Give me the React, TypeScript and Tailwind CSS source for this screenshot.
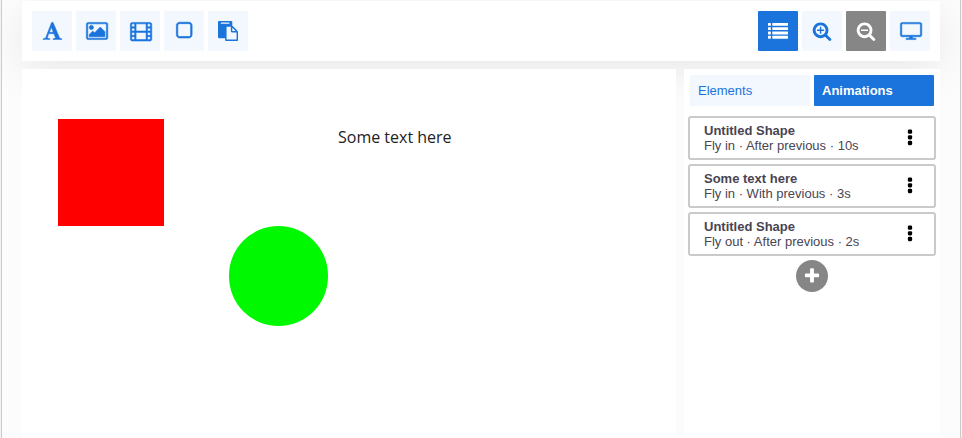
import type { ReactNode } from "react";

type GlyphProps = { className?: string; viewBox?: string; weight?: number; children: ReactNode };

function Glyph({ className = "size-5", viewBox = "0 0 1792 1792", weight = 0, children }: GlyphProps) {
  return (
    <svg
      viewBox={viewBox}
      className={`${className} shrink-0 overflow-visible`}
      fill="currentColor"
      fillRule="evenodd"
      stroke={weight ? "currentColor" : "none"}
      strokeWidth={weight}
      aria-hidden="true"
    >
      {children}
    </svg>
  );
}

/* Wide glyphs hang over both sides of the em box. */
const wide = "-96 0 1792 1792";

const FontIcon = () => (
  <Glyph weight={50} viewBox="-40 0 1792 1792">
    <path d="M789 559l-170 450q33 0 136.5 2t160.5 2q19 0 57-2-87-253-184-452zm-725 1105l2-79q23-7 56-12.5t57-10.5 49.5-14.5 44.5-29 31-50.5l237-616 280-724h128q8 14 11 21l205 480q33 78 106 257.5t114 274.5q15 34 58 144.5t72 168.5q20 45 35 57 19 15 88 29.5t84 20.5q6 38 6 57 0 5-.5 13.5t-.5 12.5q-63 0-190-8t-191-8q-76 0-215 7t-178 8q0-43 4-78l131-28q1 0 12.5-2.5t15.5-3.5 14.5-4.5 15-6.5 11-8 9-11 2.5-14q0-16-31-96.5t-72-177.5-42-100l-450-2q-26 58-76.5 195.5t-50.5 162.5q0 22 14 37.5t43.5 24.5 48.5 13.5 57 8.5 41 4q1 19 1 58 0 9-2 27-58 0-174.5-10t-174.5-10q-8 0-26.5 4t-21.5 4q-80 14-188 14z" />
  </Glyph>
);

const ImageIcon = () => (
  <Glyph weight={50} viewBox={wide}>
    <path d="M576 576q0 80-56 136t-136 56-136-56-56-136 56-136 136-56 136 56 56 136zm1024 384v448h-1408v-192l320-320 160 160 512-512zm96-704h-1600q-13 0-22.5 9.5t-9.5 22.5v1216q0 13 9.5 22.5t22.5 9.5h1600q13 0 22.5-9.5t9.5-22.5v-1216q0-13-9.5-22.5t-22.5-9.5zm160 32v1216q0 66-47 113t-113 47h-1600q-66 0-113-47t-47-113v-1216q0-66 47-113t113-47h1600q66 0 113 47t47 113z" />
  </Glyph>
);

/* A 256-unit sprocket hole, drawn from its top right corner. */
const hole = (x: number, y: number) =>
  `M${x + 256} ${y + 64}v128q0 26-19 45t-45 19h-128q-26 0-45-19t-19-45v-128q0-26 19-45t45-19h128q26 0 45 19t19 45z`;
const frame = (y: number) =>
  `M1344 ${y + 64}v512q0 26-19 45t-45 19h-768q-26 0-45-19t-19-45v-512q0-26 19-45t45-19h768q26 0 45 19t19 45z`;
const filmHoles = [256, 640, 1024, 1408].map((y) => hole(64, y) + hole(1472, y)).join("");

const FilmIcon = () => (
  <Glyph weight={50} viewBox={wide}>
    <path
      d={`M1856 288v1344q0 66-47 113t-113 47h-1600q-66 0-113-47t-47-113v-1344q0-66 47-113t113-47h1600q66 0 113 47t47 113z${filmHoles}${frame(256)}${frame(1024)}`}
    />
  </Glyph>
);

const SquareIcon = () => (
  <Glyph weight={60} viewBox="-20 20 1792 1792">
    <path d="M1312 256h-832q-66 0-113 47t-47 113v832q0 66 47 113t113 47h832q66 0 113-47t47-113v-832q0-66-47-113t-113-47zm288 160v832q0 119-84.5 203.5t-203.5 84.5h-832q-119 0-203.5-84.5t-84.5-203.5v-832q0-119 84.5-203.5t203.5-84.5h832q119 0 203.5 84.5t84.5 203.5z" />
  </Glyph>
);

const PasteIcon = () => (
  <Glyph>
    <path d="M768 1664h896v-640h-416q-40 0-68-28t-28-68v-416h-384v1152zm256-1440v-64q0-13-9.5-22.5t-22.5-9.5h-704q-13 0-22.5 9.5t-9.5 22.5v64q0 13 9.5 22.5t22.5 9.5h704q13 0 22.5-9.5t9.5-22.5zm256 672h299l-299-299v299zm512 128v672q0 40-28 68t-68 28h-960q-40 0-68-28t-28-68v-160h-544q-40 0-68-28t-28-68v-1344q0-40 28-68t68-28h1088q40 0 68 28t28 68v328q21 13 36 28l408 408q28 28 48 76t20 88z" />
  </Glyph>
);

const ListIcon = () => (
  <Glyph viewBox="0 -48 1792 1792">
    {[128, 512, 896, 1280].map((y) => (
      <g key={y}>
        <rect x="0" y={y} width="256" height="256" rx="32" />
        <rect x="384" y={y} width="1408" height="256" rx="32" />
      </g>
    ))}
  </Glyph>
);

const lens =
  "M1216 832q0-185-131.5-316.5t-316.5-131.5-316.5 131.5-131.5 316.5 131.5 316.5 316.5 131.5 316.5-131.5 131.5-316.5zm512 832q0 53-37.5 90.5t-90.5 37.5q-54 0-90-38l-343-342q-179 124-399 124-143 0-273.5-55.5t-225-150-150-225-55.5-273.5 55.5-273.5 150-225 225-150 273.5-55.5 273.5 55.5 225 150 150 225 55.5 273.5q0 220-124 399l343 343q37 37 37 90z";

const ZoomInIcon = () => (
  <Glyph>
    <path d={lens} />
    <path d="M1088 800v64q0 13-9.5 22.5t-22.5 9.5h-224v224q0 13-9.5 22.5t-22.5 9.5h-64q-13 0-22.5-9.5t-9.5-22.5v-224h-224q-13 0-22.5-9.5t-9.5-22.5v-64q0-13 9.5-22.5t22.5-9.5h224v-224q0-13 9.5-22.5t22.5-9.5h64q13 0 22.5 9.5t9.5 22.5v224h224q13 0 22.5 9.5t9.5 22.5z" />
  </Glyph>
);

const ZoomOutIcon = () => (
  <Glyph>
    <path d={lens} />
    <rect x="448" y="768" width="640" height="128" rx="32" />
  </Glyph>
);

const ScreenIcon = () => (
  <Glyph weight={50} viewBox={wide}>
    <path d="M1728 1248v-960q0-13-9.500-22.500t-22.500-9.500h-1600q-13 0-22.500 9.500t-9.500 22.500v960q0 13 9.500 22.500t22.500 9.500h1600q13 0 22.500-9.500t9.500-22.500zm128-960v960q0 66-47 113t-113 47h-736v128h352q14 0 23 9t9 23v64q0 14-9 23t-23 9h-832q-14 0-23-9t-9-23v-64q0-14 9-23t23-9h352v-128h-736q-66 0-113-47t-47-113v-960q0-66 47-113t113-47h1600q66 0 113 47t47 113z" />
    <path d="M768 1408h256v128h-256z" />
  </Glyph>
);

const MoreIcon = () => (
  <Glyph>
    {[128, 640, 1152].map((y) => (
      <rect key={y} x="704" y={y} width="384" height="384" rx="120" />
    ))}
  </Glyph>
);

const PlusIcon = () => (
  <Glyph className="size-[18px]">
    <path d="M1600 736v192q0 40-28 68t-68 28h-416v416q0 40-28 68t-68 28h-192q-40 0-68-28t-28-68v-416h-416q-40 0-68-28t-28-68v-192q0-40 28-68t68-28h416v-416q0-40 28-68t68-28h192q40 0 68 28t28 68v416h416q40 0 68 28t28 68z" />
  </Glyph>
);

const tones = {
  light: "bg-[#f2f8fd] text-[#1b74dc]",
  active: "bg-[#1b74dc] text-white",
  muted: "bg-[#868686] text-white",
};

function ToolButton({
  label,
  tone = "light",
  children,
}: {
  label: string;
  tone?: keyof typeof tones;
  children: ReactNode;
}) {
  return (
    <button
      type="button"
      aria-label={label}
      className={`flex size-10 items-center justify-center rounded-[1px] ${tones[tone]}`}
    >
      {children}
    </button>
  );
}

const animations = [
  { name: "Untitled Shape", detail: "Fly in · After previous · 10s" },
  { name: "Some text here", detail: "Fly in · With previous · 3s" },
  { name: "Untitled Shape", detail: "Fly out · After previous · 2s" },
];

export default function App() {
  return (
    <div className="flex min-h-screen bg-[#f3f3f3] px-px font-['Liberation_Sans',Arial,sans-serif] text-[13px] leading-[15px]">
      <div className="flex flex-1 flex-col gap-2 overflow-hidden border-x border-[#cccccc] bg-[#fcfcfc] px-5 py-px">
        <header className="flex justify-between bg-white p-2.5 shadow-[0_10px_40px_rgba(0,0,0,0.08)]">
          <div className="flex gap-1">
            <ToolButton label="Add text"><FontIcon /></ToolButton>
            <ToolButton label="Add image"><ImageIcon /></ToolButton>
            <ToolButton label="Add video"><FilmIcon /></ToolButton>
            <ToolButton label="Add shape"><SquareIcon /></ToolButton>
            <ToolButton label="Paste"><PasteIcon /></ToolButton>
          </div>
          <div className="flex gap-1">
            <ToolButton label="Show list" tone="active"><ListIcon /></ToolButton>
            <ToolButton label="Zoom in"><ZoomInIcon /></ToolButton>
            <ToolButton label="Zoom out" tone="muted"><ZoomOutIcon /></ToolButton>
            <ToolButton label="Present"><ScreenIcon /></ToolButton>
          </div>
        </header>

        <div className="relative flex flex-1 gap-2">
          <main className="relative flex-1 overflow-hidden bg-white">
            <div className="absolute left-9 top-[50px] h-[107px] w-[106px] bg-[#ff0000]" />
            <div className="absolute left-[207px] top-[157px] h-[100px] w-[99px] rounded-full bg-[#00f900]" />
            <p className="absolute left-[316px] top-14 whitespace-nowrap font-['Open_Sans',sans-serif] text-base text-[#222222]">
              Some text here
            </p>
          </main>

          <aside className="w-64 bg-white px-1 py-1.5">
            <div role="tablist" className="flex gap-1 px-0.5">
              <button
                type="button"
                role="tab"
                aria-selected="false"
                className="h-[31px] flex-1 rounded-[1px] bg-[#f2f8fd] px-2 text-left text-[#1b74dc]"
              >
                Elements
              </button>
              <button
                type="button"
                role="tab"
                aria-selected="true"
                className="h-[31px] flex-1 rounded-[1px] bg-[#1b74dc] px-2 text-left font-bold text-white"
              >
                Animations
              </button>
            </div>
            <ul className="mt-2.5 flex flex-col gap-1">
              {animations.map((item, i) => (
                <li
                  key={i}
                  className="flex items-center justify-between rounded-[3px] border-2 border-[#cacaca] px-3.5 py-[5px] text-[#4a4453]"
                >
                  <div>
                    <div className="font-bold">{item.name}</div>
                    <div>{item.detail}</div>
                  </div>
                  <button type="button" aria-label={`Options for ${item.name}`} className="text-black">
                    <MoreIcon />
                  </button>
                </li>
              ))}
            </ul>
            <button
              type="button"
              aria-label="Add animation"
              className="mx-auto mt-1 flex size-8 items-center justify-center rounded-full bg-[#868686] text-white"
            >
              <PlusIcon />
            </button>
          </aside>
        </div>
      </div>
    </div>
  );
}
